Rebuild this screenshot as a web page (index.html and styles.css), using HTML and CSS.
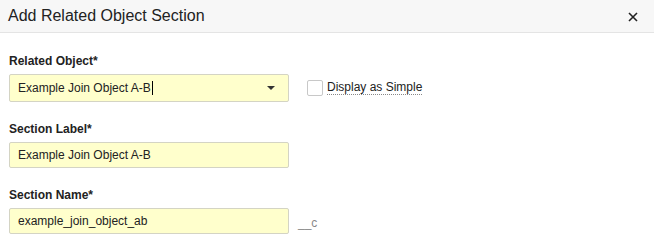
FILE: index.html
```html
<!DOCTYPE html>
<html lang="en">
<head>
  <meta charset="UTF-8">
  <title>Add Related Object Section</title>
  <link rel="stylesheet" href="styles.css">
</head>
<body>
  <div class="dialog">
    <div class="dialog-header">
      <h2>Add Related Object Section</h2>
      <svg class="close" width="10" height="10" viewBox="0 0 10 10">
        <path d="M1 1 L9 9 M9 1 L1 9" stroke="#222" stroke-width="1.6" fill="none"/>
      </svg>
    </div>

    <div class="dialog-body">
      <div class="field">
        <label>Related Object*</label>
        <div class="row">
          <div class="input select">
            <span>Example Join Object A-B<span class="caret"></span></span>
            <span class="arrow"></span>
          </div>
          <label class="check">
            <span class="box"></span>
            <span class="check-text">Display as Simple</span>
          </label>
        </div>
      </div>

      <div class="field">
        <label>Section Label*</label>
        <div class="row">
          <div class="input">Example Join Object A-B</div>
        </div>
      </div>

      <div class="field">
        <label>Section Name*</label>
        <div class="row">
          <div class="input">example_join_object_ab</div>
          <span class="suffix">__c</span>
        </div>
      </div>
    </div>
  </div>
</body>
</html>
```

FILE: styles.css
```css
body {
  margin: 0;
  font-family: "Liberation Sans", Arial, sans-serif;
  color: #222;
  background-color: #fff;
}

.dialog-header {
  height: 32px;
  background-color: #f7f7f7;
  border-bottom: 1px solid #e4e4e4;
  display: flex;
  align-items: center;
  justify-content: space-between;
  padding: 0 16px 0 8px;
}

.dialog-header h2 {
  margin: 0;
  font-size: 16px;
  font-weight: normal;
  color: #222;
}

.close {
  display: block;
  margin-top: 1px;
}

.dialog-body {
  padding: 21px 9px 0 9px;
}

.field {
  margin-bottom: 20px;
}

.field > label {
  display: block;
  font-size: 12px;
  font-weight: bold;
  line-height: 14px;
  margin-bottom: 6px;
  color: #222;
}

.row {
  display: flex;
  align-items: center;
}

.input {
  box-sizing: border-box;
  width: 280px;
  height: 26px;
  padding: 0 8px;
  display: flex;
  align-items: center;
  font-size: 12px;
  background-color: #ffffcc;
  border: 1px solid #d4d4c4;
  border-radius: 2px;
  color: #222;
}

.input.select {
  height: 28px;
  justify-content: space-between;
  padding-right: 13px;
}

.caret {
  display: inline-block;
  width: 1px;
  height: 14px;
  background-color: #000;
  vertical-align: -3px;
  margin-left: 1px;
}

.arrow {
  width: 0;
  height: 0;
  border-left: 4px solid transparent;
  border-right: 4px solid transparent;
  border-top: 4px solid #333;
}

.check {
  display: flex;
  align-items: center;
  margin-left: 18px;
  font-size: 12px;
}

.box {
  box-sizing: border-box;
  width: 16px;
  height: 16px;
  border: 1px solid #c8c8c8;
  border-radius: 2px;
  background-color: #fff;
  margin-right: 4px;
}

.check-text {
  border-bottom: 1px dotted #888;
  line-height: 13px;
}

.suffix {
  margin-left: 9px;
  font-size: 12px;
  color: #888;
  margin-top: 4px;
}
```
